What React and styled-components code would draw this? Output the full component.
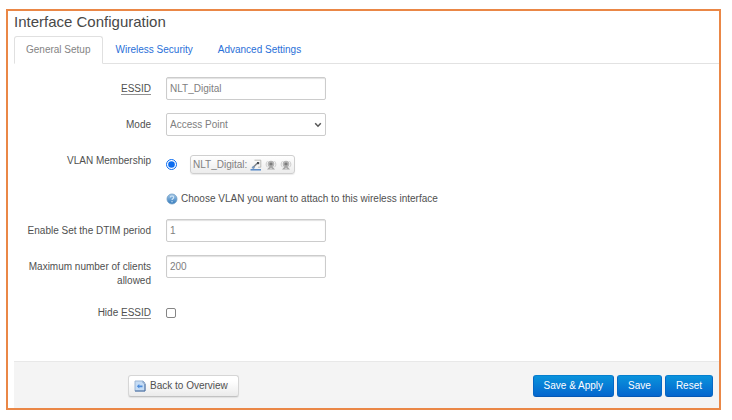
import React, { useState } from "react";
import styled, { createGlobalStyle, css } from "styled-components";

const GlobalStyle = createGlobalStyle`
    * {
        box-sizing: border-box;
    }
    body {
        margin: 0;
        background: #FFFFFF;
        color: #505050;
        font-family: "Liberation Sans", Arial, sans-serif;
        font-size: 10px;
        line-height: 14px;
    }
    button, input, select {
        font: inherit;
        margin: 0;
    }
`

const Panel = styled.main`
    margin: 9px 11px 10px 6px;
    border: 2px solid #EA8746;
    padding-left: 6px;
`

const Title = styled.h1`
    margin: 0;
    padding-top: 1px;
    font-size: 15px;
    line-height: 20px;
    font-weight: 400;
    color: #484848;
`

const TabList = styled.nav`
    display: flex;
    gap: 1px;
    margin-top: 4px;
    border-bottom: 1px solid #E2E2E2;
`

const Tab = styled.a`
    padding: 6px 11px;
    margin-bottom: -1px;
    border: 1px solid transparent;
    border-radius: 3px 3px 0 0;
    color: #2A70D8;
    text-decoration: none;
    ${({ $active }) => $active && css`
        background: #FFFFFF;
        border-color: #E0E0E0 #E0E0E0 #FFFFFF;
        color: #848484;
    `}
`

const Fields = styled.div`
    display: grid;
    gap: 13px;
    padding: 13px 0 41px;
`

const Row = styled.div`
    display: grid;
    grid-template-columns: 137px minmax(0, 1fr);
    column-gap: 15px;
`

const Label = styled.label`
    padding-top: 5px;
    text-align: right;
`

const Abbr = styled.abbr`
    text-decoration: none;
    border-bottom: 1px solid #909090;
`

const control = css`
    width: 160px;
    height: 23px;
    padding: 0 3px;
    border: 1px solid #CCCCCC;
    border-radius: 2px;
    background: #FFFFFF;
    color: #808080;
`

const TextInput = styled.input`
    ${control}
    box-shadow: inset 0 1px 1px rgba(0, 0, 0, .12);
`

const SelectBox = styled.div`
    display: grid;
    grid-template-columns: 160px;
    align-items: center;
    & > * {
        grid-area: 1 / 1;
    }
    svg {
        justify-self: end;
        margin-right: 4px;
        pointer-events: none;
    }
`

const Select = styled.select`
    ${control}
    appearance: none;
`

const Choice = styled.div`
    display: flex;
    align-items: center;
    gap: 13px;
    padding-top: 6px;
`

const Radio = styled.input`
    width: 11px;
    height: 11px;
    accent-color: #0B6CF0;
`

const Checkbox = styled.input`
    appearance: none;
    display: block;
    width: 10px;
    height: 10px;
    margin-top: 7px;
    border: 1px solid #858585;
    border-radius: 2px;
    background: #FFFFFF;
    &:checked {
        background: #0B6CF0;
    }
`

const Badge = styled.label`
    display: flex;
    align-items: center;
    gap: 3px;
    height: 19px;
    padding: 0 2px;
    border: 1px solid #CFCFCF;
    border-radius: 3px;
    background: linear-gradient(#FFFFFF, #ECECEC);
    box-shadow: 0 1px 1px rgba(0, 0, 0, .08);
    color: #808080;
`

const Hint = styled.p`
    display: flex;
    align-items: center;
    gap: 3px;
    margin: 0;
    padding: 18px 0 0;
`

const Actions = styled.footer`
    display: flex;
    justify-content: space-between;
    padding: 13px 6px 11px 114px;
    border-top: 1px solid #E8E8E8;
    background: #F4F4F4;
`

const ButtonGroup = styled.div`
    display: flex;
    gap: 3px;
`

const Button = styled.button`
    display: flex;
    align-items: center;
    gap: 4px;
    height: 22px;
    padding: 0 10px;
    border: 1px solid #0064CD;
    border-color: #0580D0 #0668C4 #0558B4;
    border-radius: 3px;
    background: linear-gradient(#0A93DC, #0466CE);
    color: #FFFFFF;
    cursor: pointer;
`

const BackButton = styled(Button)`
    padding-left: 5px;
    border-color: #D6D6D6 #D6D6D6 #C2C2C2;
    background: linear-gradient(#FFFFFF 25%, #EBEBEB);
    box-shadow: 0 1px 1px rgba(0, 0, 0, .08);
    color: #505050;
`

const ChevronIcon = () => <svg width="8" height="6" viewBox="0 0 8 6" fill="none" aria-hidden="true">
    <path d="M1.2 1.2 4 4.2 6.8 1.2" stroke="#555555" strokeWidth="1.5"/>
</svg>

const WirelessIcon = () => <svg width="12" height="12" viewBox="0 0 12 12" fill="none" aria-hidden="true">
    <path d="M4.5 1.2h6.3v7H8" stroke="#B4B4B0" strokeWidth=".9"/>
    <path d="M3 8.5 7.5 4" stroke="#7C8288" strokeWidth="1.3"/>
    <path d="M7 3h2.2v2.2H7z" fill="#4A4F55"/>
    <path d="M1.5 9 3.2 6.8 5 8.8 3.5 10z" fill="#7496BC"/>
    <path d="M.5 10.8h10.5" stroke="#4C82C4" strokeWidth="1.4"/>
</svg>

const InterfaceIcon = () => <svg width="12" height="12" viewBox="0 0 12 12" fill="none" aria-hidden="true">
    <path d="M2.5 2.2a4 4 0 0 0 0 6M9.5 2.2a4 4 0 0 1 0 6" stroke="#CCCCCC"/>
    <circle cx="6" cy="5" r="3.3" fill="#B4B4B4"/>
    <circle cx="6" cy="5" r="1.6" fill="#7C7C7C"/>
    <path d="M6 6 2 10.5h8z" fill="#A6A6A6"/>
    <path d="M4.2 10.5 6 8.4l1.8 2.1z" fill="#D4D4D4"/>
</svg>

const HelpIcon = () => <svg width="12" height="12" viewBox="0 0 12 12" fill="none" aria-hidden="true">
    <defs>
        <linearGradient id="help" x1="0" y1="0" x2="0" y2="1">
            <stop stopColor="#A9CBE8"/>
            <stop offset="1" stopColor="#2F78BC"/>
        </linearGradient>
    </defs>
    <circle cx="6" cy="6" r="5" fill="url(#help)" stroke="#6E9CC4" strokeWidth=".8"/>
    <path d="M4.3 4.6c0-2.2 3.4-2.1 3.4-.1C7.7 5.8 6 5.8 6 7" stroke="#D4E8F8" strokeWidth="1.1"/>
    <circle cx="6" cy="8.7" r=".7" fill="#D4E8F8"/>
</svg>

const BackIcon = () => <svg width="12" height="12" viewBox="0 0 12 12" fill="none" aria-hidden="true">
    <path d="M1 1h8l2 2v8H1z" fill="#C5DCF5" stroke="#9DB6D4"/>
    <path d="M1 11h10V4" stroke="#4A6E9F"/>
    <path d="M9 1v2h2" stroke="#7C97BC" strokeWidth=".8"/>
    <path d="M2.8 6.3 5.3 4v1.4h3.2v1.8H5.3v1.4z" fill="#4C8CDC"/>
</svg>

const tabs = ["General Setup", "Wireless Security", "Advanced Settings"];

const App = () => {
    const [activeTab, setActiveTab] = useState(tabs[0]);

    return <>
        <GlobalStyle/>
        <Panel>
            <Title>Interface Configuration</Title>
            <TabList>
                {tabs.map(tab => <Tab
                    key={tab}
                    href="#"
                    $active={tab === activeTab}
                    onClick={() => setActiveTab(tab)}
                >{tab}</Tab>)}
            </TabList>
            <form onSubmit={e => e.preventDefault()}>
                <Fields>
                    <Row>
                        <Label htmlFor="essid"><Abbr>ESSID</Abbr></Label>
                        <TextInput id="essid" defaultValue="NLT_Digital"/>
                    </Row>
                    <Row>
                        <Label htmlFor="mode">Mode</Label>
                        <SelectBox>
                            <Select id="mode">
                                <option>Access Point</option>
                            </Select>
                            <ChevronIcon/>
                        </SelectBox>
                    </Row>
                    <Row>
                        <Label as="span" id="vlan-label">VLAN Membership</Label>
                        <div role="radiogroup" aria-labelledby="vlan-label">
                            <Choice>
                                <Radio type="radio" id="vlan" name="vlan" defaultChecked/>
                                <Badge htmlFor="vlan">
                                    NLT_Digital:
                                    <WirelessIcon/>
                                    <InterfaceIcon/>
                                    <InterfaceIcon/>
                                </Badge>
                            </Choice>
                            <Hint>
                                <HelpIcon/>
                                Choose VLAN you want to attach to this wireless interface
                            </Hint>
                        </div>
                    </Row>
                    <Row>
                        <Label htmlFor="dtim">Enable Set the DTIM period</Label>
                        <TextInput id="dtim" defaultValue="1"/>
                    </Row>
                    <Row>
                        <Label htmlFor="clients">Maximum number of clients allowed</Label>
                        <TextInput id="clients" defaultValue="200"/>
                    </Row>
                    <Row>
                        <Label htmlFor="hide">Hide <Abbr>ESSID</Abbr></Label>
                        <Checkbox type="checkbox" id="hide"/>
                    </Row>
                </Fields>
                <Actions>
                    <BackButton type="button"><BackIcon/>Back to Overview</BackButton>
                    <ButtonGroup>
                        <Button type="submit">Save &amp; Apply</Button>
                        <Button type="submit">Save</Button>
                        <Button type="reset">Reset</Button>
                    </ButtonGroup>
                </Actions>
            </form>
        </Panel>
    </>
}

export default App;
